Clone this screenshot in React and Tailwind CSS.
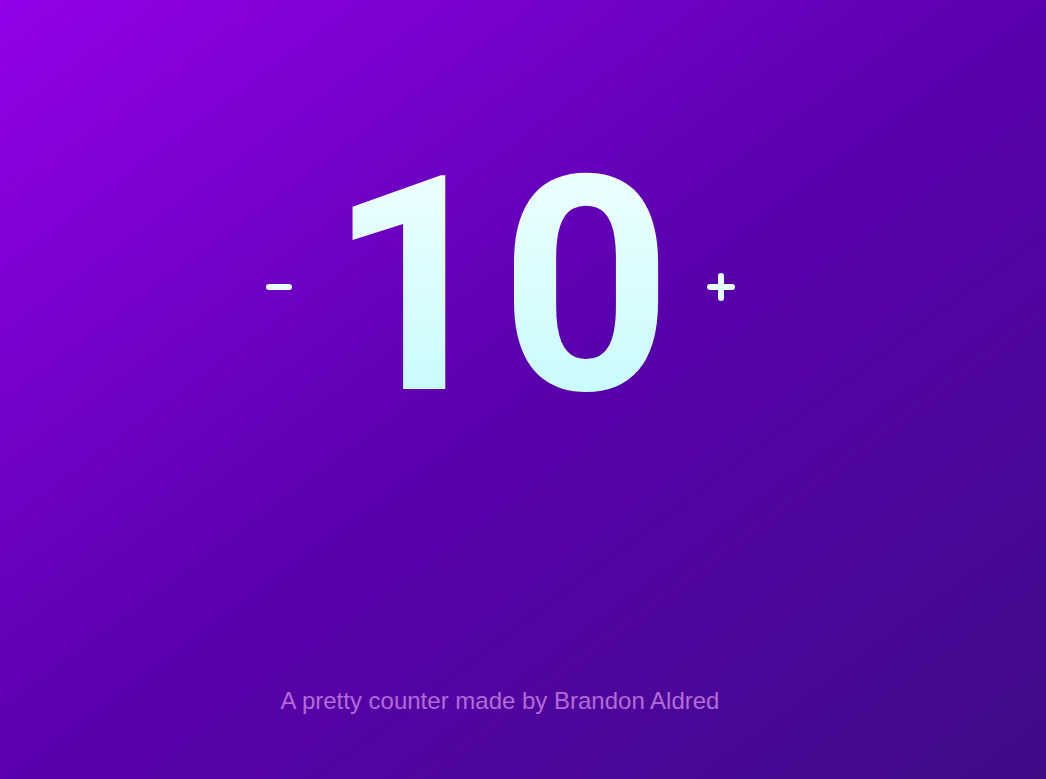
import { useState } from "react";

const App = () => {
  const [count, setCount] = useState(10);

  return (
    <div className="min-h-screen w-full bg-linear-to-br from-[#9300e8] via-[#5a00ae] to-[#3f0a88] font-['Liberation_Sans',Arial,sans-serif]">
      <div className="w-[1000px] flex flex-col items-center pt-[137px]">
        {/* Counter */}
        <div className="flex items-center h-[300px]">
          <button
            onClick={() => setCount(count - 1)}
            className="w-[28px] h-[28px] flex items-center justify-center cursor-pointer"
          >
            <svg width="28" height="28" viewBox="0 0 28 28">
              <line x1="4" y1="14" x2="24" y2="14" stroke="#e6ffff" strokeWidth="6" strokeLinecap="round" />
            </svg>
          </button>
          <span className="mx-[35px] font-['Roboto',sans-serif] text-[300px] leading-none font-bold bg-linear-to-b from-[#f2ffff] to-[#c2fbfc] bg-clip-text text-transparent">
            {count}
          </span>
          <button
            onClick={() => setCount(count + 1)}
            className="w-[28px] h-[28px] flex items-center justify-center cursor-pointer"
          >
            <svg width="28" height="28" viewBox="0 0 28 28">
              <line x1="3" y1="14" x2="25" y2="14" stroke="#e6ffff" strokeWidth="6" strokeLinecap="round" />
              <line x1="14" y1="3" x2="14" y2="25" stroke="#e6ffff" strokeWidth="6" strokeLinecap="round" />
            </svg>
          </button>
        </div>

        {/* Footer */}
        <p className="mt-[251px] text-[24px] leading-[26px] text-[#b36ad6]">
          A pretty counter made by Brandon Aldred
        </p>
      </div>
    </div>
  );
};

export default App;
